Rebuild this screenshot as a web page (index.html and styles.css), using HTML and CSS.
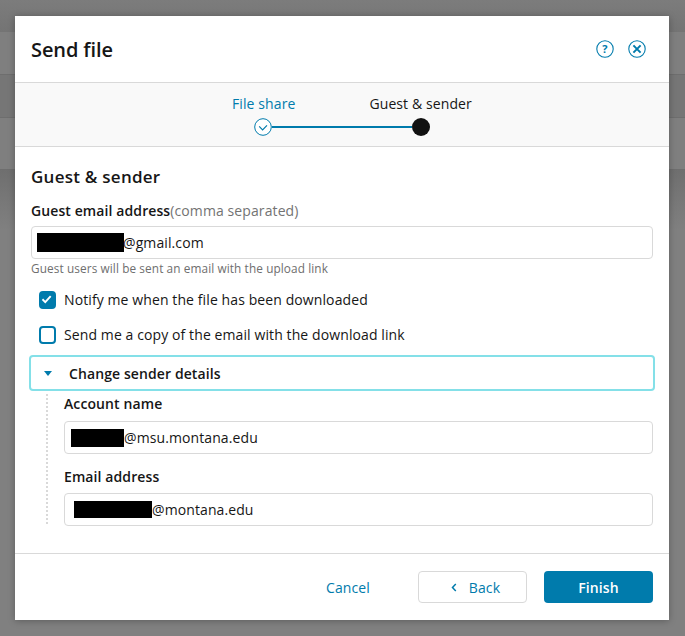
FILE: index.html
```html
<!DOCTYPE html>
<html lang="en">
<head>
<meta charset="utf-8">
<title>Send file</title>
<link rel="stylesheet" href="styles.css">
</head>
<body>
<div class="backdrop">
  <div class="bg-top"></div>
  <div class="bg-row light"></div>
  <div class="bg-row"></div>
  <div class="bg-row light tall"></div>
  <div class="bg-rest"></div>
</div>
<section class="modal">
  <header class="modal-head">
    <h1 class="modal-title">Send file</h1>
    <div class="head-icons">
      <svg class="head-icon" viewBox="0 0 18 18"><circle cx="9" cy="9" r="8.2" fill="none" stroke="#007bac" stroke-width="1.1"/><text x="9" y="13" text-anchor="middle" class="q-mark">?</text></svg>
      <svg class="head-icon" viewBox="0 0 18 18"><circle cx="9" cy="9" r="8.2" fill="none" stroke="#007bac" stroke-width="1.1"/><path d="M5.4 5.4l7.2 7.2M12.6 5.4l-7.2 7.2" fill="none" stroke="#007bac" stroke-width="2"/></svg>
    </div>
  </header>
  <div class="stepper">
    <div class="step-labels">
      <span class="step-label done">File share</span>
      <span class="step-label">Guest &amp; sender</span>
    </div>
    <div class="step-track">
      <svg class="step-check" viewBox="0 0 18 18"><circle cx="9" cy="9" r="8.3" fill="#fff" stroke="#007bac" stroke-width="1"/><path d="M5.2 8.4l3.4 3.4 4.4-4.4" fill="none" stroke="#007bac" stroke-width="1.2"/></svg>
      <span class="step-line"></span>
      <span class="step-dot"></span>
    </div>
  </div>
  <div class="modal-body">
    <h2 class="section-title">Guest &amp; sender</h2>
    <div class="field-label guest-label"><b>Guest email address</b><span class="muted">(comma separated)</span></div>
    <div class="input guest-input"><span class="redact r-guest"></span>@gmail.com</div>
    <div class="hint">Guest users will be sent an email with the upload link</div>
    <label class="check-row first">
      <span class="box on"><svg viewBox="0 0 18 18" class="tick"><path d="M3.4 9.4l3.9 3.9 7.5-8.3" fill="none" stroke="#fff" stroke-width="2.6"/></svg></span>
      Notify me when the file has been downloaded
    </label>
    <label class="check-row second">
      <span class="box"></span>
      Send me a copy of the email with the download link
    </label>
    <div class="disclosure">
      <span class="caret"></span>
      <span class="disclosure-text">Change sender details</span>
    </div>
    <div class="details">
      <div class="field-label"><b>Account name</b></div>
      <div class="input acct"><span class="redact r-acct"></span>@msu.montana.edu</div>
      <div class="field-label second-label"><b>Email address</b></div>
      <div class="input mail"><span class="redact r-mail"></span>@montana.edu</div>
    </div>
  </div>
  <footer class="modal-foot">
    <button class="btn link">Cancel</button>
    <button class="btn ghost"><svg class="chev" viewBox="0 0 8 12"><path d="M6.4 1.4L2 6l4.4 4.6" fill="none" stroke="#007bac" stroke-width="2"/></svg>Back</button>
    <button class="btn primary">Finish</button>
  </footer>
</section>
</body>
</html>
```
FILE: styles.css
```css
* { box-sizing: border-box; }
html, body { margin: 0; height: 100%; }
body {
  position: relative;
  width: 685px;
  height: 636px;
  overflow: hidden;
  background: #808080;
  font-family: "Open Sans", "Liberation Sans", sans-serif;
  letter-spacing: .1px;
  color: #161616;
}
.backdrop { position: absolute; inset: 0; }
.bg-top { height: 32px; background: linear-gradient(#7c7c7c, #747474); }
.bg-row { height: 43px; background: #767676; border-bottom: 1px solid #6e6e6e; }
.bg-row.light { background: #7f7f7f; }
.bg-row.tall { height: 52px; }
.bg-rest { height: 60px; background: linear-gradient(#6f6f6f, #808080); }
.modal {
  position: absolute;
  left: 15px;
  top: 16px;
  width: 654px;
  height: 604px;
  background: #fff;
  display: flex;
  flex-direction: column;
  box-shadow: 0 1px 7px rgba(0,0,0,.28);
}
.modal-head {
  height: 67px;
  flex: none;
  padding: 0 16px;
  display: flex;
  align-items: center;
  justify-content: space-between;
  border-bottom: 1px solid #d9d9d9;
}
.modal-title { margin: 0; font-size: 20px; line-height: 27px; font-weight: 600; letter-spacing: -.1px; }
.head-icons { display: flex; gap: 14px; margin-top: -1px; margin-right: 7px; }
.head-icon { width: 18px; height: 18px; display: block; }
.q-mark { font: 700 11px "Open Sans", sans-serif; fill: #007bac; }
.stepper {
  height: 64px;
  flex: none;
  background: #f9f9f9;
  border-bottom: 1px solid #d9d9d9;
}
.step-labels { display: flex; padding: 11px 0 0 217px; gap: 74px; line-height: 20px; font-size: 14px; }
.step-label.done { color: #007bac; }
.step-track { display: flex; align-items: center; padding-left: 239px; margin-top: 4px; }
.step-check { width: 18px; height: 18px; flex: none; }
.step-line { width: 140px; height: 2px; background: #007bac; }
.step-dot { width: 18px; height: 18px; border-radius: 50%; background: #111; flex: none; }
.modal-body { flex: 1; padding: 0 16px; }
.section-title { margin: 19px 0 0; font-size: 17px; line-height: 22px; font-weight: 600; letter-spacing: .25px; }
.field-label { font-size: 14px; line-height: 20px; }
.field-label b { font-weight: 600; }
.guest-label { margin-top: 13px; }
.muted { color: #737373; }
.input {
  border: 1px solid #d9d9d9;
  border-radius: 4px;
  height: 33px;
  font-size: 14px;
  display: flex;
  align-items: center;
  padding-left: 5px;
}
.guest-input { margin-top: 5px; }
.redact { display: inline-block; background: #000; }
.r-guest { width: 87px; height: 19px; margin-right: -1px; }
.r-acct { width: 53px; height: 18px; margin-left: 1px; }
.r-mail { width: 78px; height: 17px; margin-left: 4px; }
.hint { font-size: 11.8px; line-height: 15px; color: #6e6e6e; margin-top: 2px; }
.check-row { display: flex; align-items: center; gap: 8px; font-size: 14px; line-height: 20px; padding-left: 8px; }
.check-row.first { margin-top: 14px; }
.check-row.second { margin-top: 15px; }
.box {
  width: 17px; height: 18px; flex: none;
  border: 2px solid #007bac;
  border-radius: 4px;
  background: #fff;
  display: flex;
}
.box.on { background: #007bac; }
.tick { width: 100%; height: 100%; margin: -1px; overflow: visible; }
.disclosure {
  margin: 10px -2px 0;
  height: 36px;
  border: 2px solid #84e0e8;
  border-radius: 4px;
  display: flex;
  align-items: center;
  padding-left: 13px;
  font-size: 14px;
  font-weight: 600;
}
.caret { width: 0; height: 0; border: 4.5px solid transparent; border-top: 5px solid #007bac; border-bottom: 0; margin-right: 17px; }
.details {
  margin: 3px 0 0 15px;
  padding: 0 0 0 16px;
  border-left: 2px dotted #d9d9d9;
  height: 130px;
}
.acct { margin-top: 7px; }
.second-label { margin-top: 13px; }
.mail { margin-top: 6px; }
.modal-foot {
  height: 67px;
  flex: none;
  border-top: 1px solid #d9d9d9;
  display: flex;
  align-items: flex-start;
  justify-content: flex-end;
  padding: 17px 16px 0 0;
}
.btn { font-family: inherit; font-size: 14px; letter-spacing: .1px; height: 32px; border-radius: 4px; padding: 0; }
.link { background: none; border: 0; color: #007bac; width: 44px; margin-right: 48px; }
.ghost { background: #fff; border: 1px solid #d9d9d9; color: #007bac; width: 109px; margin-right: 17px; padding-left: 5px; display: flex; align-items: center; justify-content: center; gap: 11px; }
.chev { width: 8px; height: 9px; margin-top: 0; }
.primary { background: #007bac; border: 0; color: #fff; font-weight: 600; width: 109px; }
```
